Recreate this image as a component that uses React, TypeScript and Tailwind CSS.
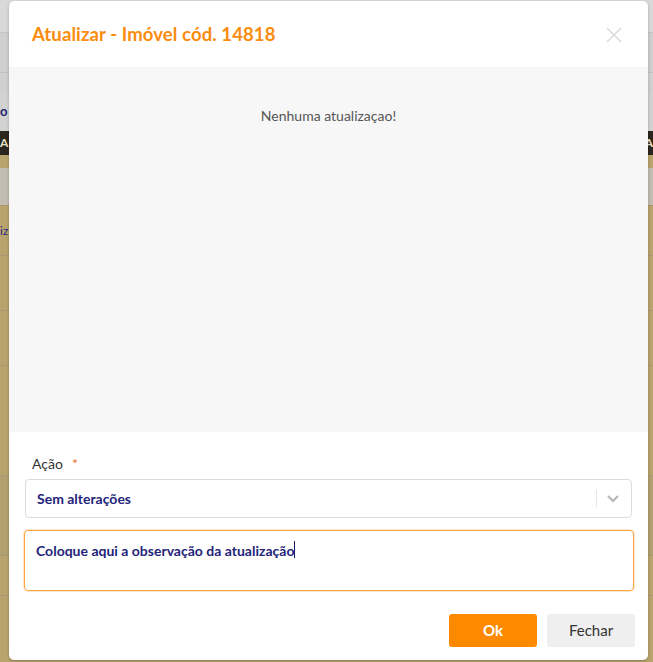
import React from "react";

export default function App() {
  return (
    <div className="relative w-[653px] h-[662px] overflow-hidden bg-[#b9a46e]" style={{ fontFamily: "Lato, 'Open Sans', sans-serif" }}>
      {/* background page behind overlay */}
      <div className="flex flex-col w-full">
        <div className="h-[33px] bg-[#d9d9d9] border-b border-[#c4c4c4]" />
        <div className="h-[40px] bg-[#cfcfcf] border-b border-[#c2c2c2]" />
        <div className="h-[20px] bg-[#d0d0d0]" />
        <div className="h-[38px] bg-[#d2d2d2] flex items-center justify-between px-0 text-[#1c1c6e] text-[13px] font-bold">
          <span>o</span>
          <span />
        </div>
        <div className="h-[24px] bg-[#2a251d] flex items-center justify-between text-[#e9e0c6] text-[12px] font-bold">
          <span>A</span>
          <span>A</span>
        </div>
        <div className="h-[13px] bg-[#b9a46e]" />
        <div className="h-[38px] bg-[#c2bdb0] border-b border-[#a99a70]" />
        <div className="h-[50px] bg-[#b9a46e] border-b border-[#a99a70] flex items-center text-[#2a2a80] text-[12px]">
          <span>iz</span>
        </div>
        <div className="h-[55px] bg-[#b9a46e] border-b border-[#a99a70]" />
        <div className="h-[55px] bg-[#b9a46e] border-b border-[#a99a70]" />
        <div className="h-[110px] bg-[#b9a46e] border-b border-[#a99a70]" />
        <div className="h-[80px] bg-[#b3a070] border-b border-[#a99a70]" />
        <div className="h-[40px] bg-[#b9a46e] border-b border-[#a99a70]" />
        <div className="h-[70px] bg-[#b9a46e] border-b border-[#a99a70]" />
      </div>

      {/* modal */}
      <div className="absolute left-[9px] top-[1px] w-[639px] h-[659px] bg-white rounded-[5px] flex flex-col shadow-[0_1px_3px_rgba(0,0,0,0.25)]">
        <div className="h-[66px] flex items-center justify-between pl-[23px] pr-[26px] shrink-0">
          <h1 className="text-[#fa8c0f] text-[18.5px] font-bold tracking-[0.1px] mt-[1px]">Atualizar - Imóvel cód. 14818</h1>
          <svg width="16" height="16" viewBox="0 0 16 16" className="mt-[1px]">
            <path d="M1 1 L15 15 M15 1 L1 15" stroke="#d6d6d6" strokeWidth="1.3" fill="none" />
          </svg>
        </div>
        <div className="h-[365px] bg-[#f7f7f7] flex justify-center shrink-0">
          <p className="mt-[38px] text-[14px] text-[#555555]">Nenhuma atualizaçao!</p>
        </div>
        <div className="flex flex-col px-[15px] pt-[22px]">
          <div className="flex items-center text-[14px] text-[#333] pl-[8px] h-[18px]">
            <span>Ação</span>
            <span className="ml-[9px] text-[#f26d3d]">*</span>
          </div>
          <div className="mt-[7px] mx-[1px] h-[39px] border border-[#dcdcdc] rounded-[4px] flex items-center">
            <span className="pl-[11px] flex-1 text-[14px] font-bold text-[#24247a]">Sem alterações</span>
            <div className="w-px h-[18px] bg-[#e6e6e6]" />
            <svg width="34" height="12" viewBox="0 0 34 12">
              <path d="M11 3 L16 8 L21 3" stroke="#b5b5b5" strokeWidth="2" fill="none" />
            </svg>
          </div>
          <div className="mt-[12px] -mr-[1px] h-[61px] border border-[#ffa540] rounded-[4px] shadow-[0_0_0_1px_rgba(255,180,100,0.35)] flex items-start pl-[11px] pt-[9px]">
            <span className="text-[14px] font-bold text-[#24247a]">Coloque aqui a observação da atualização</span>
            <span className="inline-block w-px h-[17px] bg-[#1a1a6e] mt-[1px]" />
          </div>
          <div className="flex justify-end gap-[10px] mt-[23px] -mr-[2px]">
            <button className="w-[88px] h-[33px] rounded-[3px] bg-[#ff8a00] text-white text-[15px] font-bold">Ok</button>
            <button className="w-[88px] h-[33px] rounded-[3px] bg-[#efefef] text-[#333] text-[15px]">Fechar</button>
          </div>
        </div>
      </div>
    </div>
  );
}
